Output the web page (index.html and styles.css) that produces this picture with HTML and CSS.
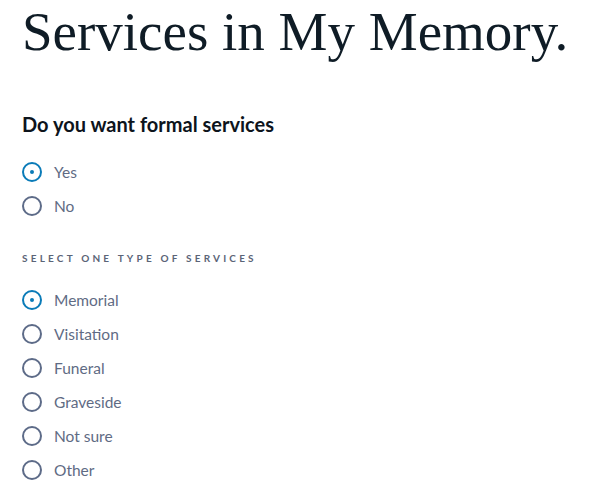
FILE: index.html
```html
<!DOCTYPE html>
<html>
<head>
<meta charset="utf-8">
<link rel="stylesheet" href="styles.css">
</head>
<body>
<main class="page">
  <h1 class="title">Services in My Memory.</h1>
  <section class="group">
    <h2 class="question">Do you want formal services</h2>
    <div class="options">
      <label class="option"><span class="radio checked"></span><span class="text">Yes</span></label>
      <label class="option"><span class="radio"></span><span class="text">No</span></label>
    </div>
  </section>
  <section class="group">
    <div class="eyebrow">SELECT ONE TYPE OF SERVICES</div>
    <div class="options">
      <label class="option"><span class="radio checked"></span><span class="text">Memorial</span></label>
      <label class="option"><span class="radio"></span><span class="text">Visitation</span></label>
      <label class="option"><span class="radio"></span><span class="text">Funeral</span></label>
      <label class="option"><span class="radio"></span><span class="text">Graveside</span></label>
      <label class="option"><span class="radio"></span><span class="text">Not sure</span></label>
      <label class="option"><span class="radio"></span><span class="text">Other</span></label>
    </div>
  </section>
</main>
</body>
</html>
```
FILE: styles.css
```css
html, body {
  margin: 0;
  padding: 0;
  background: #ffffff;
}
.page {
  padding: 0 0 0 22px;
  font-family: Lato, "Liberation Sans", sans-serif;
}
.title {
  margin: 0;
  padding-top: 2px;
  font-family: "Liberation Serif", serif;
  font-weight: 400;
  font-size: 55px;
  line-height: 60px;
  color: #0f1c26;
}
.question {
  margin: 50px 0 0 0;
  font-size: 20px;
  line-height: 24px;
  font-weight: 700;
  color: #0d141c;
}
.options {
  display: flex;
  flex-direction: column;
  gap: 14px;
  margin-top: 26px;
}
.option {
  display: flex;
  align-items: center;
  gap: 12px;
  height: 20px;
}
.radio {
  box-sizing: border-box;
  width: 20px;
  height: 20px;
  border: 2px solid #5d6b88;
  border-radius: 50%;
  display: flex;
  align-items: center;
  justify-content: center;
}
.radio.checked {
  border-color: #0a7bb8;
}
.radio.checked::after {
  content: "";
  width: 4px;
  height: 4px;
  border-radius: 50%;
  background: #0a7bb8;
}
.text {
  font-size: 15.5px;
  color: #5f6b84;
}
.group + .group {
  margin-top: 35px;
}
.eyebrow {
  font-size: 10px;
  font-weight: 700;
  letter-spacing: 3.2px;
  color: #5b6477;
  line-height: 14px;
}
.group + .group .options {
  margin-top: 25px;
}
```
